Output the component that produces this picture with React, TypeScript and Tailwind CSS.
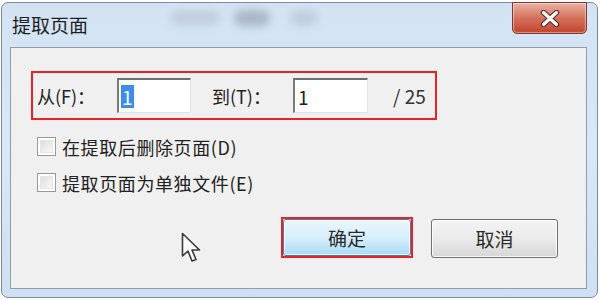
import React from 'react';

const FONT = { fontFamily: '"Microsoft YaHei", "Noto Sans CJK SC", "Noto Sans", sans-serif' };

function CloseGlyph() {
  return (
    <svg width="22" height="17" viewBox="0 0 22 17">
      <path d="M4.5 2.5 L17.5 14.5 M17.5 2.5 L4.5 14.5" stroke="#5a2a22" strokeWidth="5.5" strokeLinecap="round" />
      <path d="M4.5 2.5 L17.5 14.5 M17.5 2.5 L4.5 14.5" stroke="#ffffff" strokeWidth="3.2" strokeLinecap="round" />
    </svg>
  );
}

function Checkbox({ label }: { label: string }) {
  return (
    <div className="flex items-center">
      <div className="w-[19px] h-[19px] border border-[#999] bg-white p-[2px]">
        <div className="w-full h-full bg-gradient-to-br from-[#dedede] to-[#f8f8f8] border border-[#e4e4e4]" />
      </div>
      <span className="ml-[6px] text-[18px] tracking-[0.6px] text-[#222] leading-none">{label}</span>
    </div>
  );
}

function Cursor() {
  return (
    <svg width="22" height="32" viewBox="0 0 22 32" className="absolute left-[181px] top-[232px]">
      <path
        d="M1.5 1.5 L1.5 24 L7 19 L11 29 L15 27.5 L11 18 L18.5 18 Z"
        fill="#ffffff"
        stroke="#3a3a3a"
        strokeWidth="1.6"
        strokeLinejoin="round"
      />
    </svg>
  );
}

export default function App() {
  return (
    <div className="relative w-[600px] h-[300px] bg-white overflow-hidden pl-[1px] pt-[2px]" style={FONT}>
      {/* window */}
      <div className="w-[597px] h-[296px] rounded-[7px] border border-[#7d8b99] bg-gradient-to-b from-[#d3e3f4] via-[#d9e8f8] to-[#cfe0f2] flex flex-col">
        {/* title bar */}
        <div className="h-[44px] flex items-start">
          <div className="mt-[12px] ml-[10px] text-[19px] text-[#1f1f1f] leading-none">提取页面</div>
          <div className="ml-[82px] mt-[8px] w-[50px] h-[14px] rounded-full bg-[#b3bfcc] blur-[4px] opacity-60" />
          <div className="ml-[14px] mt-[7px] w-[36px] h-[16px] rounded-full bg-[#8c98a6] blur-[4px] opacity-60" />
          <div className="ml-[20px] mt-[8px] w-[28px] h-[14px] rounded-full bg-[#a8b4c2] blur-[4px] opacity-50" />
          <div className="ml-auto mr-[10px] -mt-[1px] w-[75px] h-[32px] rounded-b-[5px] border border-[#7a3a30] bg-gradient-to-b from-[#e9b2a4] via-[#d4725c] to-[#c2422a] flex items-center justify-center shadow-[inset_0_0_1px_1px_rgba(255,255,255,0.45)]">
            <CloseGlyph />
          </div>
        </div>

        {/* client area */}
        <div className="ml-[8px] w-[577px] h-[242px] border border-[#8f9cab] bg-[#f0f0f0] flex flex-col">
          {/* range row */}
          <div className="ml-[20px] mt-[23px] w-[406px] h-[49px] border-2 border-[#ec2025] flex items-center">
            <span className="ml-[4px] w-[80px] text-[18px] text-[#222] leading-none">从(F)：</span>
            <div className="w-[74px] h-[35px] bg-white border-t-2 border-l-2 border-r border-b border-t-[#6e6e6e] border-l-[#7a7a7a] border-r-[#e4e4e4] border-b-[#e4e4e4] flex items-center pl-[2px]">
              <span className="bg-[#3d8ee8] text-white text-[19px] leading-[23px] px-[1px]">1</span>
            </div>
            <span className="ml-[21px] w-[81px] text-[18px] text-[#222] leading-none">到(T)：</span>
            <div className="w-[75px] h-[35px] bg-white border-t-2 border-l-2 border-r border-b border-t-[#6e6e6e] border-l-[#7a7a7a] border-r-[#e4e4e4] border-b-[#e4e4e4] flex items-center pl-[3px]">
              <span className="text-[#222] text-[19px] leading-none">1</span>
            </div>
            <span className="ml-[25px] text-[19px] text-[#333] leading-none">/ 25</span>
          </div>

          {/* options */}
          <div className="ml-[26px] mt-[17px] flex flex-col gap-[17px]">
            <Checkbox label="在提取后删除页面(D)" />
            <Checkbox label="提取页面为单独文件(E)" />
          </div>

          {/* buttons */}
          <div className="ml-[270px] mt-[25px] flex items-start">
            <div className="border-2 border-[#ec2025]">
              <div className="w-[128px] h-[37px] rounded-[3px] border border-[#3c7fb1] bg-gradient-to-b from-[#eaf6fd] via-[#d7effc] to-[#a9dbf6] shadow-[inset_0_0_0_1px_rgba(255,255,255,0.8)] flex items-center justify-center">
                <span className="text-[19px] text-[#2a2a2a] leading-none">确定</span>
              </div>
            </div>
            <div className="ml-[18px] mt-[2px] w-[127px] h-[39px] rounded-[3px] border border-[#707070] bg-gradient-to-b from-[#f4f4f4] via-[#ebebeb] to-[#d6d6d6] shadow-[inset_0_0_0_1px_rgba(255,255,255,0.8)] flex items-center justify-center">
              <span className="text-[19px] text-[#2a2a2a] leading-none">取消</span>
            </div>
          </div>
        </div>
      </div>
      <Cursor />
    </div>
  );
}
